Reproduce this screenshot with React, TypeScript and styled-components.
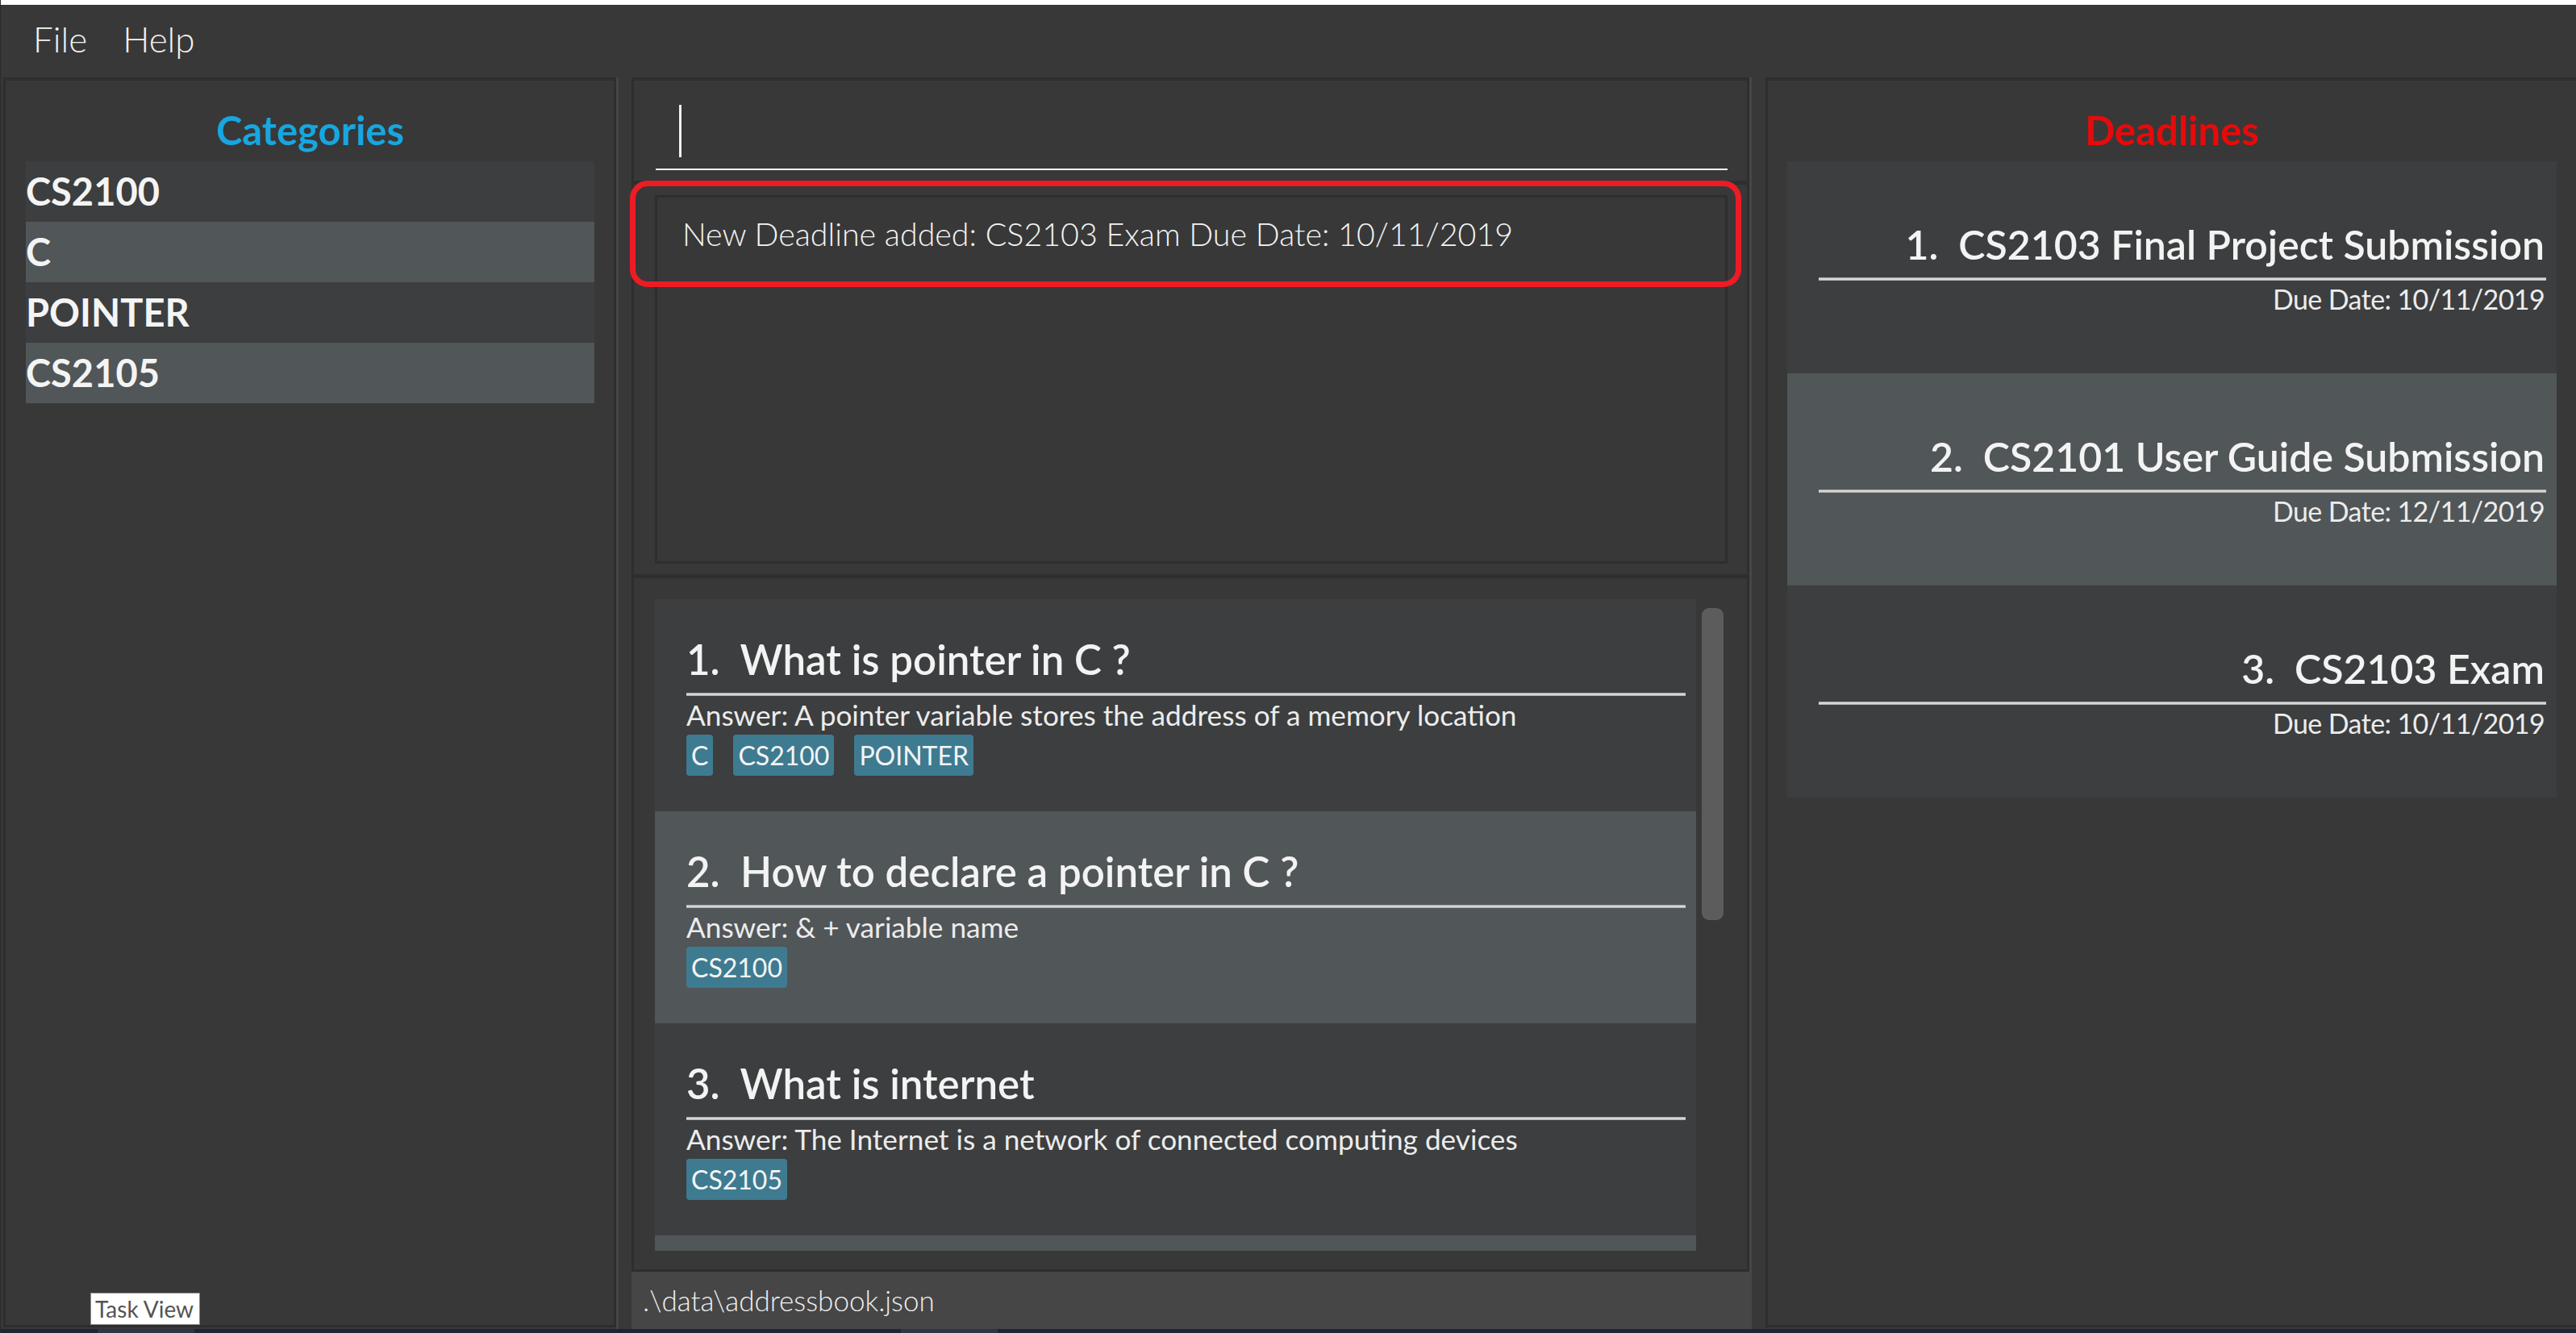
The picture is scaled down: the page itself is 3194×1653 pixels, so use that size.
import React from 'react';
import styled, { createGlobalStyle } from 'styled-components';

const Global = createGlobalStyle`
  html, body { margin: 0; padding: 0; background: #383838; }
  body { width: 3194px; height: 1653px; overflow: hidden; font-family: Lato, "Noto Sans", sans-serif; }
  #root { width: 3194px; height: 1653px; }
  * { box-sizing: border-box; }
`;

const Window = styled.div`
  position: relative;
  width: 3194px;
  height: 1653px;
  display: flex;
  flex-direction: column;
  background: #383838;
  border-left: 1px solid #2a2a2a;
  overflow: hidden;
`;

const TopStripe = styled.div`
  flex: none;
  height: 6px;
  margin-left: -1px;
  background: #ffffff;
`;

const MenuBar = styled.div`
  flex: none;
  height: 90px;
  display: flex;
  align-items: center;
  gap: 44px;
  padding: 0 0 6px 40px;
`;

const MenuItem = styled.span`
  font-family: Lato, "Noto Sans", sans-serif;
  font-weight: 300;
  font-size: 44px;
  color: #f2f2f2;
`;

const Main = styled.div`
  flex: 1;
  min-height: 0;
  display: flex;
  padding-left: 3px;
`;

const Panel = styled.div`
  display: flex;
  flex-direction: column;
  border: 3px solid #2e2e2e;
  border-top-width: 4px;
  background: #383838;
`;

const SidePanel = styled(Panel)<{ $width?: number }>`
  ${(p) => (p.$width ? `width: ${p.$width}px; flex: none;` : 'flex: 1;')}
  margin-bottom: 2px;
  padding: 31px 24px 0 25px;
`;

const RightPanel = styled(SidePanel)`
  border-right: none;
  padding: 31px 24px 0 24px;
`;

const PanelTitle = styled.div<{ $color: string }>`
  text-align: center;
  font-family: Lato, "Noto Sans", sans-serif;
  font-weight: 700;
  font-size: 49px;
  line-height: 60px;
  color: ${(p) => p.$color};
  margin-bottom: 9px;
`;

const Divider = styled.div<{ $w: number }>`
  flex: none;
  width: ${(p) => p.$w}px;
  border-left: 3px solid #464646;
`;

const CategoryRow = styled.div<{ $alt: boolean }>`
  height: 75px;
  line-height: 75px;
  font-family: Lato, "Noto Sans", sans-serif;
  font-weight: 700;
  font-size: 47px;
  color: #f4f4f4;
  background: ${(p) => (p.$alt ? '#515658' : '#3c3e3f')};
`;

const Center = styled.div`
  position: relative;
  flex: none;
  width: 1386px;
  display: flex;
  flex-direction: column;
`;

const CommandPane = styled.div`
  flex: none;
  height: 130px;
  border: 3px solid #2e2e2e;
  border-top-width: 4px;
  border-bottom-width: 2px;
  padding: 15px 24px 0 27px;
`;

const CommandField = styled.div`
  height: 96px;
  border-bottom: 2px solid #ffffff;
  display: flex;
  align-items: center;
  padding-left: 29px;
`;

const Caret = styled.span`
  display: block;
  width: 3px;
  height: 65px;
  background: #f0f0f0;
`;

const ResultPane = styled.div`
  flex: none;
  height: 488px;
  display: flex;
  border: 3px solid #2e2e2e;
  border-bottom-width: 2px;
  padding: 13px 24px 13px 26px;
`;

const ResultBox = styled.div`
  flex: 1;
  border: 3px solid #2e2e2e;
  padding: 21px 31px;
  font-family: Lato, "Noto Sans", sans-serif;
  font-weight: 300;
  font-size: 39.4px;
  line-height: 48px;
  color: #f4f4f4;
`;

const Annotation = styled.div`
  position: absolute;
  left: -2px;
  top: 128px;
  width: 1378px;
  height: 132px;
  border: 7px solid #ed1c24;
  border-radius: 22px;
  pointer-events: none;
`;

const ListPane = styled.div`
  flex: 1;
  min-height: 0;
  display: flex;
  border: 3px solid #2e2e2e;
  padding: 26px 26px 23px 26px;
`;

const ListViewport = styled.div`
  flex: 1;
  min-height: 0;
  display: flex;
  overflow: hidden;
`;

const Cards = styled.div`
  flex: none;
  width: 1291px;
  overflow: hidden;
  display: flex;
  flex-direction: column;
`;

const ScrollTrack = styled.div`
  flex: none;
  width: 37px;
  padding: 11px 3px 0 7px;
`;

const ScrollThumb = styled.div`
  height: 387px;
  border-radius: 9px;
  background: #5c5c5c;
`;

const Card = styled.div<{ $alt: boolean }>`
  flex: none;
  height: 263px;
  padding: 0 13px 0 39px;
  display: flex;
  flex-direction: column;
  justify-content: center;
  background: ${(p) => (p.$alt ? '#515658' : '#3c3e3f')};
`;

const CardTitle = styled.div<{ $right?: boolean }>`
  white-space: pre;
  font-family: Lato, "Noto Sans", sans-serif;
  font-weight: 600;
  font-size: ${(p) => (p.$right ? '50px' : '51px')};
  line-height: 62px;
  color: #f3f3f3;
  text-align: ${(p) => (p.$right ? 'right' : 'left')};
  padding-right: ${(p) => (p.$right ? '2px' : '0')};
`;

const Rule = styled.div`
  height: 4px;
  margin-top: 10px;
  background: linear-gradient(#a9a9a9 0 1px, #d6d6d6 1px 3px, #b5b5b5 3px 4px);
`;

const Answer = styled.div`
  margin-top: 3px;
  font-family: Lato, "Noto Sans", sans-serif;
  font-weight: 400;
  font-size: 35.2px;
  line-height: 40px;
  color: #ececec;
`;

const TagRow = styled.div`
  display: flex;
  gap: 25px;
  margin-top: 5px;
`;

const Tag = styled.span`
  height: 51px;
  padding: 0 6px;
  border-radius: 4px;
  background: #3e7b91;
  font-family: Lato, "Noto Sans", sans-serif;
  font-size: 32px;
  line-height: 51px;
  color: #f4f4f4;
`;

const DueDate = styled.div`
  margin-top: 2px;
  padding-right: 2px;
  text-align: right;
  font-family: Lato, "Noto Sans", sans-serif;
  font-weight: 400;
  font-size: 34px;
  letter-spacing: -0.6px;
  line-height: 42px;
  color: #ececec;
`;

const StatusBar = styled.div`
  flex: none;
  height: 71px;
  background: #464646;
  padding-left: 14px;
  font-family: Lato, "Noto Sans", sans-serif;
  font-weight: 300;
  font-size: 35px;
  line-height: 71px;
  color: #f0f0f0;
`;

const Taskbar = styled.div`
  flex: none;
  height: 5px;
  display: flex;
  background: #1c2733;
`;

const TaskbarSlot = styled.div<{ $w: number; $ml: number }>`
  width: ${(p) => p.$w}px;
  margin-left: ${(p) => p.$ml}px;
  background: #2c3743;
`;

const Tooltip = styled.div`
  position: absolute;
  left: 111px;
  top: 1603px;
  width: 136px;
  height: 40px;
  background: #ffffff;
  border: 1px solid #8a8a8a;
  padding: 0 5px;
  font-family: Lato, "Noto Sans", sans-serif;
  font-size: 28px;
  line-height: 38px;
  color: #555555;
  white-space: nowrap;
`;

const categories = ['CS2100', 'C', 'POINTER', 'CS2105'];

const questions = [
  { q: 'What is pointer in C ?', a: 'A pointer variable stores the address of a memory location', tags: ['C', 'CS2100', 'POINTER'] },
  { q: 'How to declare a pointer in C ?', a: '& + variable name', tags: ['CS2100'] },
  { q: 'What is internet', a: 'The Internet is a network of connected computing devices', tags: ['CS2105'] },
];

const deadlines = [
  { t: 'CS2103 Final Project Submission', d: '10/11/2019' },
  { t: 'CS2101 User Guide Submission', d: '12/11/2019' },
  { t: 'CS2103 Exam', d: '10/11/2019' },
];

export default function App() {
  return (
    <>
      <Global />
      <Window>
        <TopStripe />
        <MenuBar>
          <MenuItem>File</MenuItem>
          <MenuItem>Help</MenuItem>
        </MenuBar>
        <Main>
          <SidePanel $width={760}>
            <PanelTitle $color="#17a6e0">Categories</PanelTitle>
            {categories.map((c, i) => (
              <CategoryRow key={c} $alt={i % 2 === 1}>{c}</CategoryRow>
            ))}
          </SidePanel>
          <Divider $w={19} />
          <Center>
            <CommandPane>
              <CommandField>
                <Caret />
              </CommandField>
            </CommandPane>
            <ResultPane>
              <ResultBox>New Deadline added: CS2103 Exam Due Date: 10/11/2019</ResultBox>
            </ResultPane>
            <ListPane>
              <ListViewport>
                <Cards>
                  {questions.map((item, i) => (
                    <Card key={item.q} $alt={i % 2 === 1}>
                      <CardTitle>{`${i + 1}.  ${item.q}`}</CardTitle>
                      <Rule />
                      <Answer>Answer: {item.a}</Answer>
                      <TagRow>
                        {item.tags.map((t) => (
                          <Tag key={t}>{t}</Tag>
                        ))}
                      </TagRow>
                    </Card>
                  ))}
                  <Card $alt />
                </Cards>
                <ScrollTrack>
                  <ScrollThumb />
                </ScrollTrack>
              </ListViewport>
            </ListPane>
            <StatusBar>.\data\addressbook.json</StatusBar>
            <Annotation />
          </Center>
          <Divider $w={20} />
          <RightPanel>
            <PanelTitle $color="#e80a0a">Deadlines</PanelTitle>
            {deadlines.map((d, i) => (
              <Card key={d.t} $alt={i % 2 === 1}>
                <CardTitle $right>{`${i + 1}.  ${d.t}`}</CardTitle>
                <Rule />
                <DueDate>Due Date: {d.d}</DueDate>
              </Card>
            ))}
          </RightPanel>
        </Main>
        <Taskbar>
          <TaskbarSlot $w={120} $ml={120} />
          <TaskbarSlot $w={120} $ml={876} />
        </Taskbar>
        <Tooltip>Task View</Tooltip>
      </Window>
    </>
  );
}
